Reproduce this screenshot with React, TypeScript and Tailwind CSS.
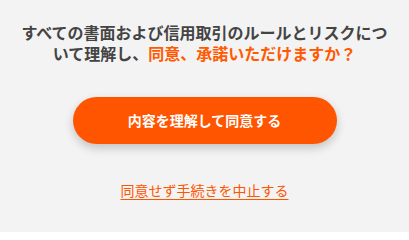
import React from "react";

export default function App() {
  return (
    <div
      className="w-[409px] h-[232px] bg-[#f3f3f3] flex flex-col items-center pt-[22px]"
      style={{ fontFamily: '"Noto Sans CJK JP", "Noto Sans", sans-serif' }}
    >
      <p className="px-[20px] text-center text-[16px] leading-[21px] font-bold text-[#444444]">
        すべての書面および信用取引のルールとリスクについて理解し、
        <span className="text-[#ff5a00]">同意、承諾いただけますか？</span>
      </p>
      <button className="mt-[33px] w-[264px] h-[47px] rounded-full bg-[#ff5500] text-white text-[14px] font-bold shadow-[0_4px_10px_rgba(0,0,0,0.2)]">
        内容を理解して同意する
      </button>
      <a
        href="#"
        className="mt-[36px] text-[14px] leading-[20px] text-[#ff5500] underline underline-offset-[3px]"
      >
        同意せず手続きを中止する
      </a>
    </div>
  );
}
